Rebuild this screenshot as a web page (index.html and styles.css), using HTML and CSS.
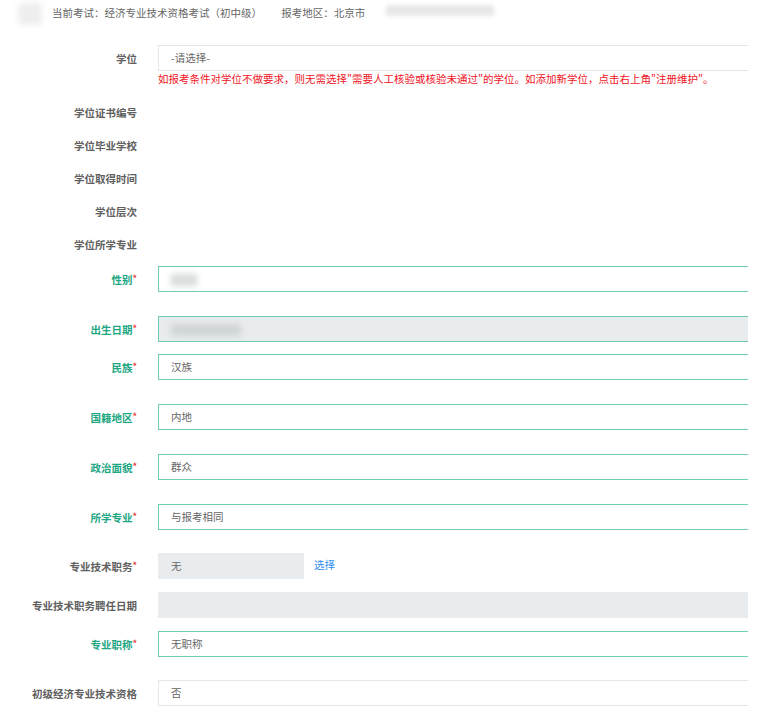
FILE: index.html
```html
<!DOCTYPE html>
<html lang="zh-CN">
<head>
<meta charset="UTF-8" />
<meta name="viewport" content="width=device-width, initial-scale=1" />
<title>报名信息</title>
<link rel="stylesheet" href="styles.css">
</head>
<body>

<div class="header">
  <span class="blur-logo"></span>
  <span class="exam">当前考试：经济专业技术资格考试（初中级）</span>
  <span class="area">报考地区：北京市</span>
  <span class="blur-user"></span>
</div>

<div class="form">
  <div class="row">
    <label class="label">学位</label>
    <div class="field">
      <div class="input light">-请选择-</div>
    </div>
  </div>
  <div class="tip">如报考条件对学位不做要求，则无需选择"需要人工核验或核验未通过"的学位。如添加新学位，点击右上角"注册维护"。</div>

  <div class="plain-rows">
    <div class="row plain"><label class="label">学位证书编号</label></div>
    <div class="row plain"><label class="label">学位毕业学校</label></div>
    <div class="row plain"><label class="label">学位取得时间</label></div>
    <div class="row plain"><label class="label">学位层次</label></div>
    <div class="row plain"><label class="label">学位所学专业</label></div>
  </div>

  <div class="row first">
    <label class="label green">性别<i>*</i></label>
    <div class="field"><div class="input ok"><span class="blur-val short"></span></div></div>
  </div>
  <div class="row wide">
    <label class="label green">出生日期<i>*</i></label>
    <div class="field"><div class="input ok gray"><span class="blur-val long"></span></div></div>
  </div>
  <div class="row">
    <label class="label green">民族<i>*</i></label>
    <div class="field"><div class="input ok">汉族</div></div>
  </div>
  <div class="row wide">
    <label class="label green">国籍地区<i>*</i></label>
    <div class="field"><div class="input ok">内地</div></div>
  </div>
  <div class="row wide">
    <label class="label green">政治面貌<i>*</i></label>
    <div class="field"><div class="input ok">群众</div></div>
  </div>
  <div class="row wide">
    <label class="label green">所学专业<i>*</i></label>
    <div class="field"><div class="input ok">与报考相同</div></div>
  </div>
  <div class="row mid">
    <label class="label">专业技术职务<i>*</i></label>
    <div class="field">
      <div class="input gray small">无</div>
      <a class="pick" href="#">选择</a>
    </div>
  </div>
  <div class="row near">
    <label class="label">专业技术职务聘任日期</label>
    <div class="field"><div class="input gray"></div></div>
  </div>
  <div class="row near">
    <label class="label green">专业职称<i>*</i></label>
    <div class="field"><div class="input ok">无职称</div></div>
  </div>
  <div class="row mid">
    <label class="label">初级经济专业技术资格</label>
    <div class="field"><div class="input light">否</div></div>
  </div>
</div>

</body>
</html>
```

FILE: styles.css
```css
body {
  margin: 0;
  background: #fff;
  color: #666;
  font-family: "Noto Sans CJK SC", "Noto Sans", sans-serif;
  font-size: 10.5px;
}
.header {
  position: relative;
  height: 25px;
  line-height: 25px;
  padding-left: 52px;
  color: #666;
}
.header .area {
  margin-left: 17px;
}
.blur-logo {
  position: absolute;
  left: 18px;
  top: 3px;
  width: 24px;
  height: 22px;
  background: #eee;
  border-radius: 4px;
  filter: blur(3px);
}
.blur-user {
  position: absolute;
  left: 386px;
  top: 5px;
  width: 108px;
  height: 11px;
  background: #e8e8e8;
  filter: blur(2px);
}
.form {
  width: 748px;
  margin-top: 20px;
}
.row {
  display: flex;
  align-items: center;
  height: 26px;
  margin-top: 12px;
}
.form > .row:first-child {
  margin-top: 0;
}
.row.first {
  margin-top: 5px;
}
.row.wide {
  margin-top: 24px;
}
.row.mid {
  margin-top: 23px;
}
.row.near {
  margin-top: 13px;
}
.plain-rows {
  padding-top: 9px;
}
.row.plain {
  height: 33px;
  margin-top: 0;
}
.label {
  width: 137px;
  flex: none;
  text-align: right;
  color: #606060;
  font-weight: bold;
}
.label i {
  font-style: normal;
  color: #e8413c;
  font-size: 9px;
  vertical-align: 2px;
}
.label.green {
  color: #1fa784;
}
.field {
  flex: 1;
  display: flex;
  align-items: center;
  margin-left: 21px;
  height: 100%;
}
.input {
  flex: 1;
  height: 100%;
  box-sizing: border-box;
  padding-left: 12px;
  line-height: 24px;
  border: 1px solid #e6e6e6;
  border-right: none;
  background: #fff;
  color: #666;
}
.input.ok {
  border-color: #6fcbb2;
}
.input.gray {
  background: #e9ecee;
  border-color: #e9ecee;
}
.input.ok.gray {
  border-color: #6fcbb2;
}
.input.small {
  flex: none;
  width: 146px;
}
.pick {
  margin-left: 10px;
  margin-top: -3px;
  color: #2d8cf0;
  text-decoration: none;
}
.tip {
  margin-left: 158px;
  height: 16px;
  line-height: 16px;
  color: #f0141e;
}
.blur-val {
  display: inline-block;
  vertical-align: middle;
  height: 12px;
  background: #d8dcdc;
  filter: blur(3px);
}
.blur-val.short {
  width: 26px;
}
.blur-val.long {
  width: 70px;
  background: #d0d4d4;
}
```
